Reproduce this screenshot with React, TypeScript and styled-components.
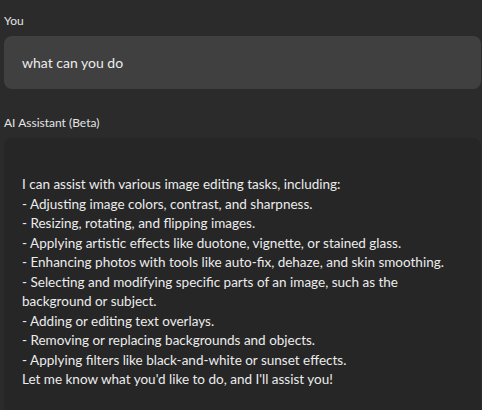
import React from 'react';
import styled, { createGlobalStyle } from 'styled-components';

const GlobalStyle = createGlobalStyle`
    html, body {
        margin: 0;
        padding: 0;
        background: #2b2b2b;
        font-family: Lato, "Noto Sans", sans-serif;
        color: #e8e8e8;
    }
`;

const Thread = styled.div`
    display: flex;
    flex-direction: column;
    padding: 13px 1px 0 4px;
    height: 410px;
    overflow: hidden;
    box-sizing: border-box;
`;

const Sender = styled.div`
    font-size: 12px;
    color: #e4e4e4;
    margin-bottom: 8px;
`;

const Bubble = styled.div<{ $variant: 'user' | 'assistant' }>`
    background: ${({ $variant }) => ($variant === 'user' ? '#404040' : '#262626')};
    border-radius: 8px;
    padding: ${({ $variant }) => ($variant === 'user' ? '16px 18px 16px' : '37px 18px 30px')};
    font-size: ${({ $variant }) => ($variant === 'user' ? '14px' : '13.5px')};
    line-height: ${({ $variant }) => ($variant === 'user' ? '21px' : '19.5px')};
    color: #ececec;
    margin-bottom: ${({ $variant }) => ($variant === 'user' ? '26px' : '0')};
    white-space: pre-line;
`;

const reply = `I can assist with various image editing tasks, including:
- Adjusting image colors, contrast, and sharpness.
- Resizing, rotating, and flipping images.
- Applying artistic effects like duotone, vignette, or stained glass.
- Enhancing photos with tools like auto-fix, dehaze, and skin smoothing.
- Selecting and modifying specific parts of an image, such as the background or subject.
- Adding or editing text overlays.
- Removing or replacing backgrounds and objects.
- Applying filters like black-and-white or sunset effects.
Let me know what you'd like to do, and I'll assist you!`;

const App: React.FC = () => {
    return (
        <>
            <GlobalStyle />
            <Thread>
                <Sender>You</Sender>
                <Bubble $variant="user">what can you do</Bubble>
                <Sender>AI Assistant (Beta)</Sender>
                <Bubble $variant="assistant">{reply}</Bubble>
            </Thread>
        </>
    );
};

export default App;
